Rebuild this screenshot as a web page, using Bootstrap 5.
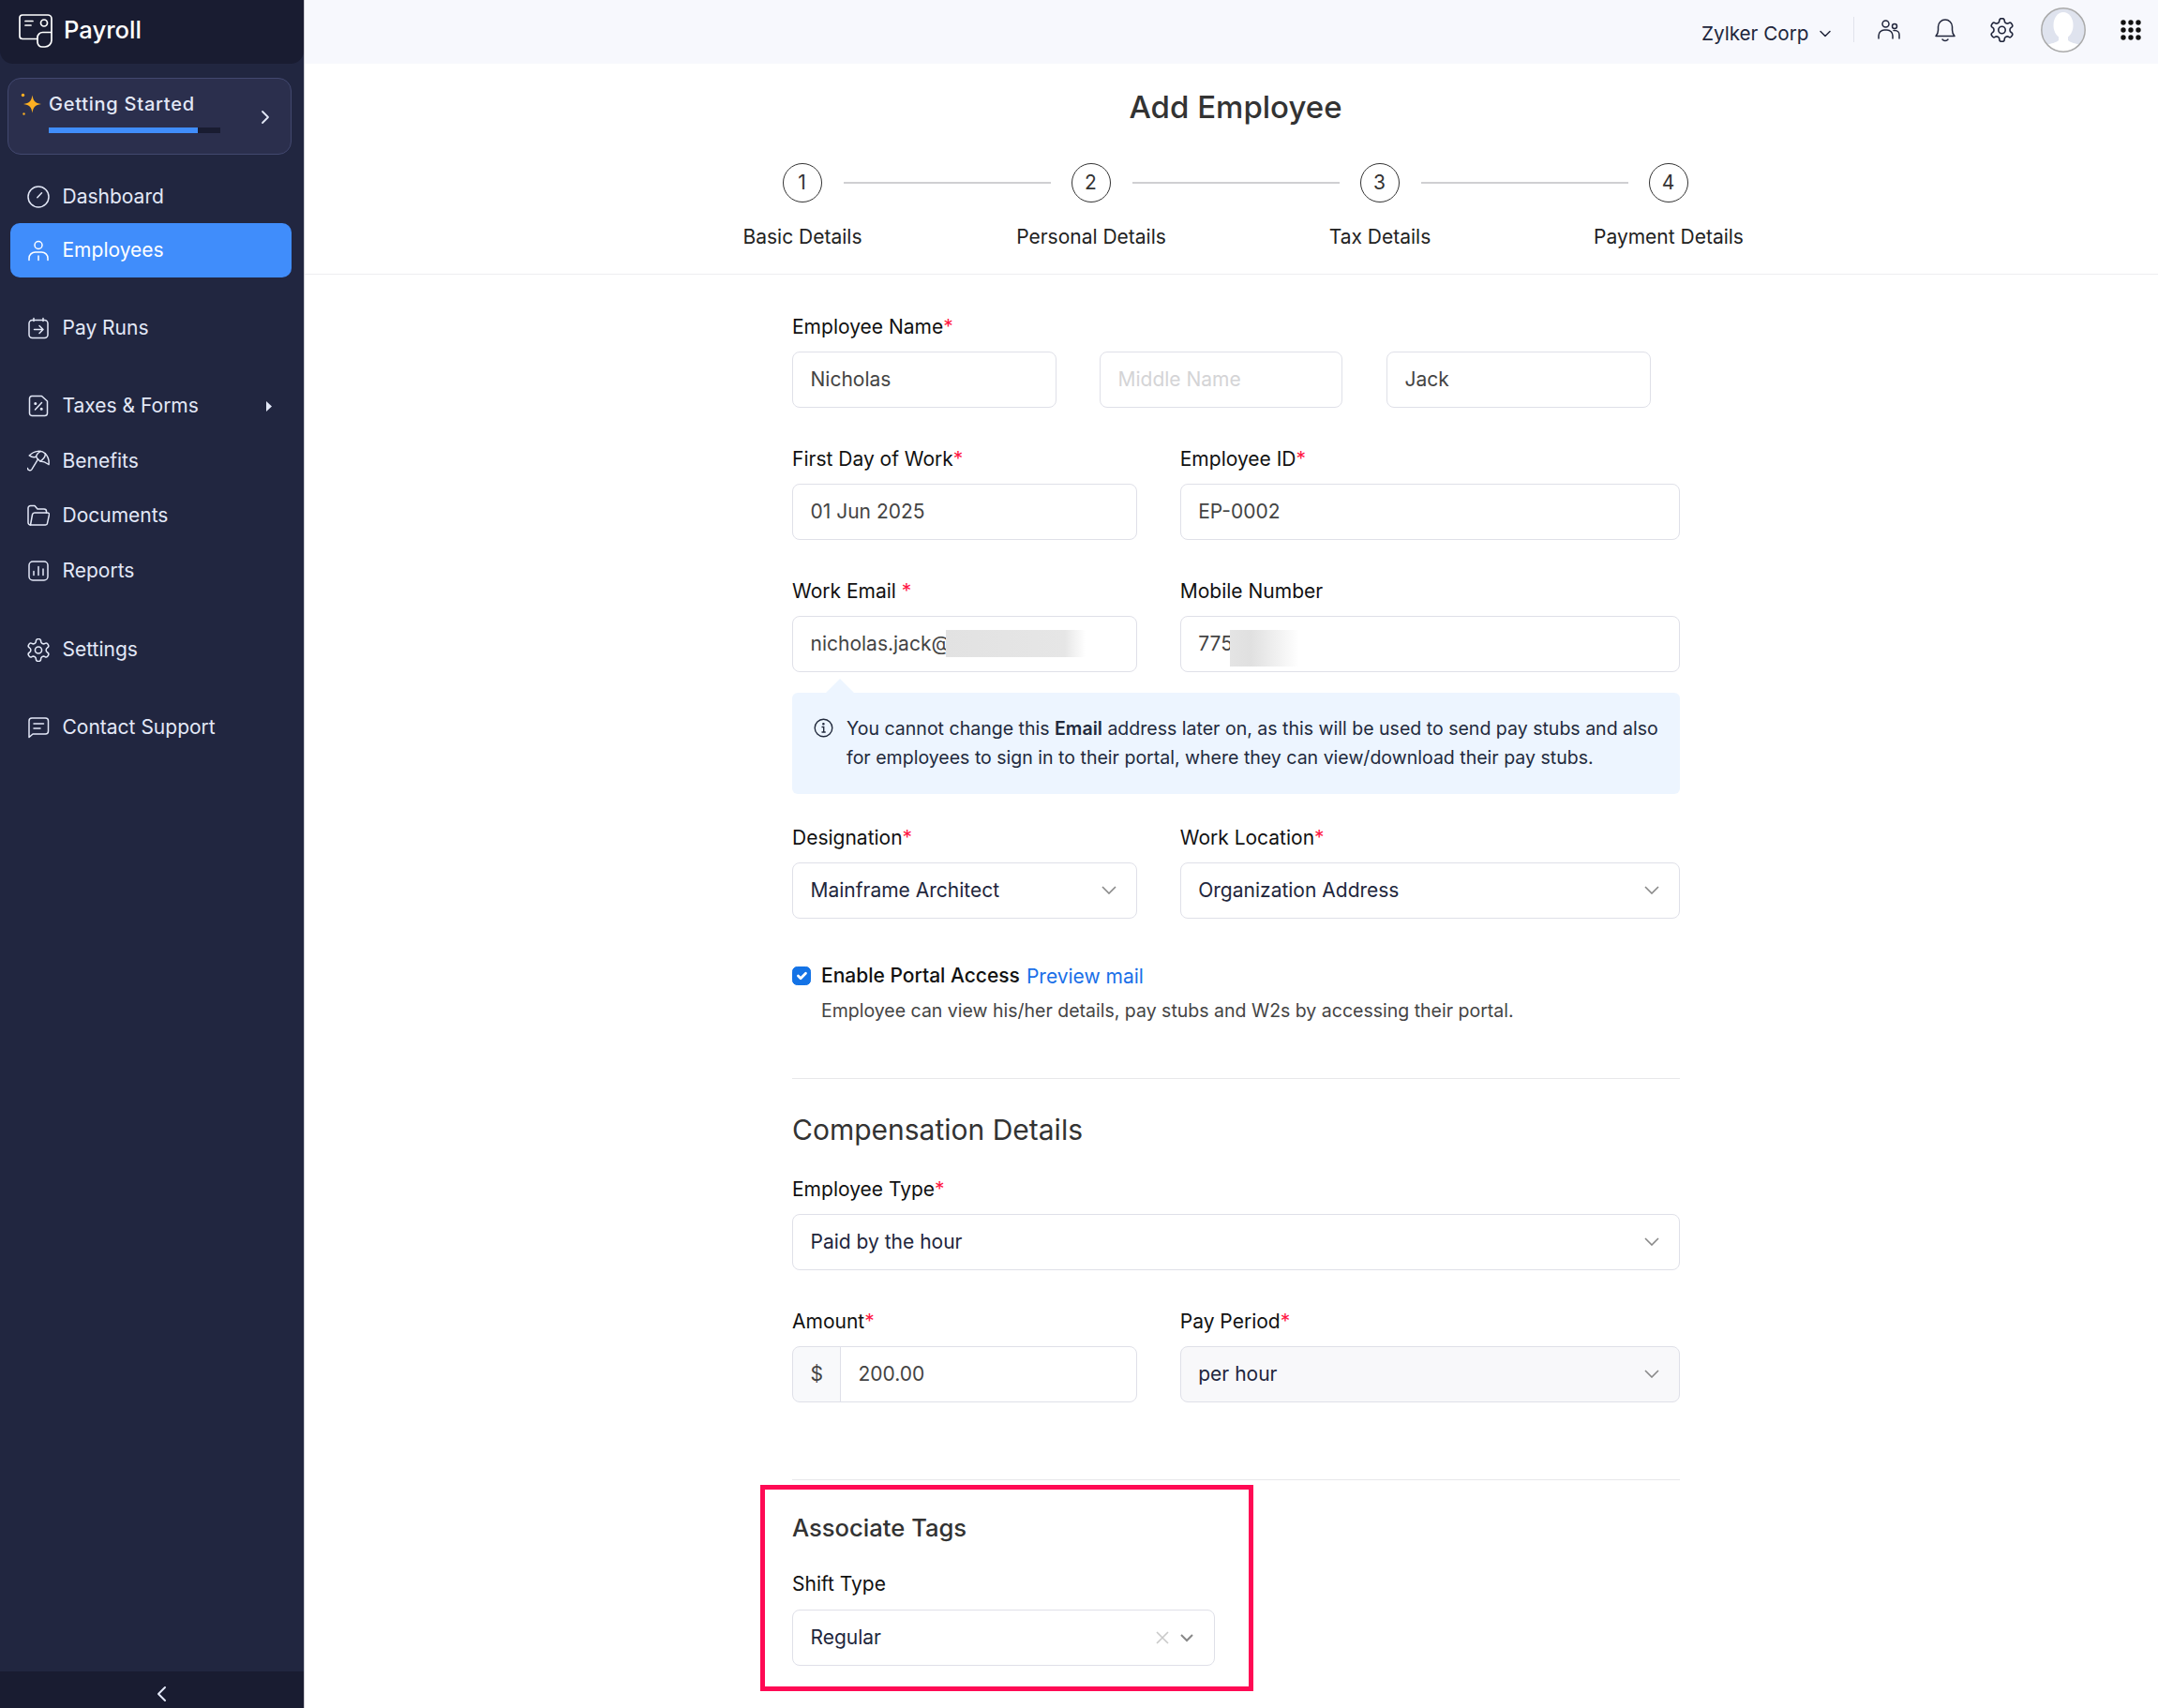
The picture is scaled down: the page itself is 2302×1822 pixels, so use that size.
<!DOCTYPE html>
<html lang="en">
<head>
<meta charset="UTF-8">
<meta name="viewport" content="width=device-width, initial-scale=1.0">
<title>Payroll - Add Employee</title>
<link href="https://cdn.jsdelivr.net/npm/bootstrap@5.3.0/dist/css/bootstrap.min.css" rel="stylesheet">
<style>
    html, body { height: 100%; }
    body { font-family: Inter, "Liberation Sans", sans-serif; font-size: 21px; color: #21263c; background: #fff; overflow: hidden; }

    /* sidebar */
    .side { width: 325px; height: 100vh; background: #212640; border-right: 1.5px solid #c9c9cf; color: #e3e8f7; flex: none; }
    .side-top { height: 68px; background: #191c31; border-radius: 0 0 14px 14px; padding: 0 0 3px 20px; gap: 12px; font-size: 25.6px; font-weight: 500; color: #fff; }
    .start-box { margin: 15px 13px 0 8px; height: 82px; background: #2b2f4d; border: 1.5px solid #42486f; border-radius: 14px; position: relative; padding: 14px 0 0 13px; }
    .start-title { font-size: 20px; font-weight: 500; letter-spacing: .75px; margin-left: 6px; line-height: 26px; }
    .start-bar { width: 183px; height: 6px; background: #191c31; margin: 12px 0 0 30px; }
    .start-fill { height: 100%; background: #408dfb; }
    .start-arrow { position: absolute; right: 22px; top: 33px; }
    .side-link { height: 58px; width: 300px; margin-left: 11px; padding-left: 18px; gap: 13.5px; border-radius: 10px; color: #e3e8f7; text-decoration: none; }
    .side-link.on { background: #408dfb; color: #fff; }
    .side-link svg { flex: none; }
    .m-dash { margin-top: 15.5px; }
    .m-tight { margin-top: -.5px; }
    .m-group { margin-top: 25px; }
    .m-one { margin-top: 1px; }
    .m-set { margin-top: 26px; }
    .m-help { margin-top: 25px; }
    .side-end { height: 39px; background: #191c31; padding: 9px 0 0 20px; }
    .ico { fill: none; stroke: currentColor; stroke-width: 1.5; stroke-linecap: round; stroke-linejoin: round; }
    .ico-cog { stroke-width: 1.3; }
    .tax-arrow { margin-right: 21px; }

    /* top bar */
    .top-strip { height: 68px; background: #f7f8fd; padding: 0 18px 5px 0; color: #21263c; }
    .org-name { font-size: 20.7px; margin: 8px 10px 0 0; }
    .org-arrow { margin-top: 8px; }
    .top-sep { width: 1.5px; height: 27px; background: #e1e3ec; margin: 0 25px 0 23px; }
    .gap-a { margin-right: 36px; }
    .gap-b { margin-right: 29px; }
    .gap-c { margin-right: 37px; }

    /* heading and steps */
    .page-head { height: 225px; border-bottom: 1.5px solid #eeeef1; padding: 26.5px 0 0 9px; }
    .page-title { font-size: 33px; line-height: 38px; font-weight: 500; color: #333; margin: 0 0 41.5px; }
    .step-wrap { width: 1232px; }
    .step-col { width: 308px; text-align: center; color: #222; }
    .step-ball { width: 42px; height: 42px; flex: none; border: 1.5px solid #333; border-radius: 50%; font-size: 21px; color: #333; }
    .step-line { height: 1.5px; background: #cfcfd2; flex: 1; }
    .step-l { margin-right: 22px; }
    .step-r { margin-left: 23px; }
    .step-name { line-height: 30px; margin-top: 21.5px; }

    /* form */
    .form-wrap { padding: 40.5px 0 0 10px; }
    .form-col { width: 947px; }
    .row-gap { --bs-gutter-x: 46px; }
    .fld-label { display: block; line-height: 30px; margin-bottom: 11px; color: #111; }
    .req { color: #ff1744; }
    .fld-row { margin-bottom: 40px; }
    .form-control, .form-select, .input-group-text { font-size: 21px; height: 60px; border: 1.5px solid #dfe0e8; border-radius: 8px; padding: 0 18.5px; color: #444; box-shadow: none; }
    .form-select { color: #21263c; background-size: 16px 9px; background-position: right 21px center; background-image: url("data:image/svg+xml,%3Csvg xmlns='http://www.w3.org/2000/svg' viewBox='0 0 16 9'%3E%3Cpath fill='none' stroke='%23888' stroke-width='1.6' d='M1 1l7 7 7-7'/%3E%3C/svg%3E"); }
    .form-control::placeholder { color: #d4d4d6; }
    .name-a { width: 282px; }
    .name-b { width: 259px; margin: 0 47px 0 46px; }
    .name-c { width: 282px; }
    .input-group-text { width: 52px; background: #f8f9fb; color: #444; }
    .sel-soft { background-color: #f8f8fa; }
    .mask-mail { position: absolute; left: 164px; top: 15px; width: 149px; height: 29px; background: linear-gradient(to right, #e2e2e2, #e6e6e6 85%, #fff); }
    .mask-phone { position: absolute; left: 53px; top: 15px; width: 74px; height: 39px; background: linear-gradient(to right, #e4e4e4, #e0e0e0 30%, #fff); }
    .note-box { position: relative; background: #edf5ff; border-radius: 6px; height: 108px; margin: 22px 0 32px; padding: 23px 12px 0 23px; gap: 14px; line-height: 31px; font-size: 19.55px; color: #222a3d; }
    .note-box::before { content: ""; position: absolute; left: 36px; top: -15px; border-left: 15px solid transparent; border-right: 15px solid transparent; border-bottom: 15px solid #edf5ff; }
    .note-box b { font-weight: 600; }
    .portal-row { margin-top: 47px; line-height: 26px; }
    .form-check-input { width: 20px; height: 20px; margin: 0 11px 0 0; border-radius: 4px; flex: none; }
    .form-check-input:checked { background-color: #1473e6; border-color: #1473e6; }
    .portal-name { font-weight: 500; color: #111; margin-right: 7px; }
    .portal-link { color: #1a6fe8; text-decoration: none; margin-top: 2px; }
    .portal-hint { margin: 10px 0 0 31px; line-height: 26px; font-size: 19.5px; color: #444; }
    .split-line { border-top: 1.5px solid #e8e8ea; }
    .line-a { margin-top: 59px; }
    .line-b { margin-top: 82.5px; }
    .sec-title { font-size: 30px; line-height: 38px; color: #333; margin: 35px 0 30px; font-weight: 400; }
    .frame-box { width: 526px; height: 220px; margin: 5px 0 0 -34px; border: 5px solid #ff0a54; padding: 24px 0 0 29px; }
    .tag-title { font-size: 25.6px; line-height: 34px; font-weight: 500; color: #333; margin: 0 0 28px; }
    .shift-input { width: 451px; color: #21263c; padding-right: 22px; margin-top: 12px; }
</style>
</head>
<body class="d-flex">
<svg class="d-none">
    <symbol id="cog" viewBox="2 1.500 20 21"><path d="M12.220 2h-.44a2 2 0 0 0-2 2v.18a2 2 0 0 1-1 1.730l-.43.25a2 2 0 0 1-2 0l-.15-.08a2 2 0 0 0-2.730.73l-.22.38a2 2 0 0 0 .73 2.730l.15.1a2 2 0 0 1 1 1.720v.51a2 2 0 0 1-1 1.740l-.15.09a2 2 0 0 0-.73 2.730l.22.38a2 2 0 0 0 2.730.73l.15-.08a2 2 0 0 1 2 0l.43.25a2 2 0 0 1 1 1.730V20a2 2 0 0 0 2 2h.44a2 2 0 0 0 2-2v-.18a2 2 0 0 1 1-1.730l.43-.25a2 2 0 0 1 2 0l.15.08a2 2 0 0 0 2.730-.73l.22-.39a2 2 0 0 0-.73-2.730l-.15-.08a2 2 0 0 1-1-1.740v-.5a2 2 0 0 1 1-1.740l.15-.09a2 2 0 0 0 .73-2.730l-.22-.38a2 2 0 0 0-2.730-.73l-.15.08a2 2 0 0 1-2 0l-.43-.25a2 2 0 0 1-1-1.730V4a2 2 0 0 0-2-2z"/><circle cx="12" cy="12" r="3"/></symbol>
</svg>

<aside class="side d-flex flex-column">
    <div class="side-top d-flex align-items-center">
        <svg width="36" height="36" viewBox="20 14 36 36" class="ico" style="stroke-width:1.7"><path d="M39 40.500H24a3 3 0 0 1-3-3V18a3 3 0 0 1 3-3h27a4 4 0 0 1 4 4v23a7 7 0 0 1-7 7h-3a5 5 0 0 1-5-5v-5a5.500 5.500 0 0 1 5.500-5.500H55"/><path d="M27 21.500h8M27 26h6"/><circle cx="47" cy="23.500" r="3.500"/></svg>
        <span>Payroll</span>
    </div>
    <div class="start-box">
        <div class="d-flex align-items-center">
            <svg width="24" height="26" viewBox="0 0 24 26"><path fill="#fdb022" d="M12.500 3.500c.9 6 3 8.600 9.500 9.500-6.500.9-8.600 3.500-9.500 9.500-.9-6-3-8.600-9.500-9.500 6.500-.9 8.600-3.500 9.500-9.500z"/><circle cx="2.500" cy="3.500" r="1.700" fill="#fdb022"/><circle cx="3.500" cy="23.500" r="1.200" fill="#fdb022"/></svg>
            <span class="start-title">Getting Started</span>
        </div>
        <div class="start-bar"><div class="start-fill" style="width:87%"></div></div>
        <svg class="start-arrow ico" width="10" height="16" viewBox="0 0 10 16" style="stroke-width:1.8"><path d="M2 2l6 6-6 6"/></svg>
    </div>
    <a class="side-link d-flex align-items-center m-dash" href="#"><svg class="ico" width="24" height="24" viewBox="0 0 24 24"><circle cx="12" cy="12" r="11"/><path d="M10.800 12.800l4.700-5"/></svg>Dashboard</a>
    <a class="side-link on d-flex align-items-center m-tight" href="#"><svg class="ico" width="24" height="24" viewBox="0 0 24 24"><circle cx="12" cy="6.500" r="4"/><path d="M2 22.500v-2a6.500 6.500 0 0 1 6.500-6.500h7a6.500 6.500 0 0 1 6.500 6.500v2M12 18v4.500"/></svg>Employees</a>
    <a class="side-link d-flex align-items-center m-group" href="#"><svg class="ico" width="24" height="24" viewBox="0 0 24 24"><rect x="2" y="3.500" width="20" height="19" rx="3.500"/><path d="M7 1.500v3M17 1.500v3M7.500 13.500h9M13 9.500l4 4-4 4"/></svg>Pay Runs</a>
    <a class="side-link d-flex align-items-center m-group" href="#"><svg class="ico" width="24" height="24" viewBox="0 0 24 24"><path d="M5 1.500h10.500l6 5.500v13a2.800 2.800 0 0 1-2.800 2.500H5A2.800 2.800 0 0 1 2.500 20V4A2.800 2.800 0 0 1 5 1.500z"/><path d="M8.500 16l7-7.500"/><circle cx="8.800" cy="9.500" r=".8"/><circle cx="15.200" cy="15.200" r=".8"/></svg>Taxes &amp; Forms<svg class="ms-auto tax-arrow" width="6" height="11" viewBox="0 0 6 11"><path fill="#e3e8f7" d="M0 0l6 5.500L0 11z"/></svg></a>
    <a class="side-link d-flex align-items-center m-one" href="#"><svg class="ico" width="24" height="24" viewBox="0 0 25 24"><path d="M2.300 5.700C8 0 16-.5 20 3.500c4 4 4.500 7.500 4 12.200-3-2.200-4.500-3.500-9.500-3.700C13 11 10.800 9.500 10 7 7 8.200 5 7.500 2.300 5.700z"/><path d="M15 1c-3 1.500-4.500 3.500-5 6M20 3.500c.5 3-2.500 6.500-5.500 8.500M12 9.700L5 21.200a2.500 2.500 0 0 1-4.500-1.500"/></svg>Benefits</a>
    <a class="side-link d-flex align-items-center" href="#"><svg class="ico" width="24" height="24" viewBox="0 0 24 24"><path d="M3.500 22A2.500 2.500 0 0 1 1 19.500V4a2.500 2.500 0 0 1 2.500-2.500H8l3 3.500h7a2.500 2.500 0 0 1 2.500 2.500V9"/><path d="M3.500 22h16a2 2 0 0 0 2-1.800L23.500 11a1.800 1.800 0 0 0-1.800-2H8a2.500 2.500 0 0 0-2.500 2L3.500 22z"/></svg>Documents</a>
    <a class="side-link d-flex align-items-center m-one" href="#"><svg class="ico" width="24" height="24" viewBox="0 0 24 24"><rect x="2" y="2" width="20" height="20" rx="4"/><path d="M7 16.500v-4M12 16.500v-9M17 16.500v-6.500"/></svg>Reports</a>
    <a class="side-link d-flex align-items-center m-set" href="#"><svg class="ico ico-cog" width="24" height="25" viewBox="0 0 24 25"><use href="#cog"/></svg>Settings</a>
    <a class="side-link d-flex align-items-center m-help" href="#"><svg class="ico" width="24" height="24" viewBox="0 0 24 24"><path d="M2 22.500V5a3 3 0 0 1 3-3h14.500a3 3 0 0 1 3 3v11a3 3 0 0 1-3 3H6z"/><path d="M7 8h10.500M7 13h7"/></svg>Contact Support</a>
    <div class="side-end mt-auto d-flex align-items-center justify-content-center">
        <svg class="ico" width="12" height="18" viewBox="0 0 12 18" style="stroke-width:2"><path d="M10 2L3 9l7 7"/></svg>
    </div>
</aside>

<div class="flex-grow-1">
    <div class="top-strip d-flex align-items-center justify-content-end">
        <span class="org-name">Zylker Corp</span>
        <svg class="ico org-arrow" width="14" height="8" viewBox="0 0 14 8"><path d="M2 1.500l5 5 5-5"/></svg>
        <span class="top-sep"></span>
        <svg class="ico gap-a" width="24" height="24" viewBox="0 0 24 24"><circle cx="8.500" cy="5.500" r="3.500"/><circle cx="18" cy="8" r="2.500"/><path d="M1 21v-3a6 6 0 0 1 6-6h3a6 6 0 0 1 6 6v3M17 12.500h1.500a4.500 4.500 0 0 1 4.500 4.500v4"/></svg>
        <svg class="ico gap-a" width="24" height="26" viewBox="0 0 24 26"><path d="M2 19.500c2-2 2.500-3 2.500-6.500V9.500a7.500 7.500 0 0 1 15 0V13c0 3.500.5 4.500 2.500 6.500z"/><path d="M9 23c1.500 2 4.500 2 6 0"/></svg>
        <svg class="ico ico-cog gap-b" width="25" height="26" viewBox="0 0 25 26"><use href="#cog"/></svg>
        <svg class="gap-c" width="48" height="48" viewBox="0 0 48 48"><defs><clipPath id="avatarClip"><circle cx="24" cy="24" r="23"/></clipPath></defs><circle cx="24" cy="24" r="23" fill="#dfe3ee"/><g clip-path="url(#avatarClip)"><ellipse cx="24" cy="19" rx="10.500" ry="14" fill="#fff"/><path fill="#fff" d="M19 30h10v5c3 3 8 3 12 5v8H7v-8c4-2 9-2 12-5z"/></g><circle cx="24" cy="24" r="23.200" fill="none" stroke="#aaa" stroke-width="1.500"/></svg>
        <svg width="22" height="22" viewBox="0 0 22 22" fill="#111"><circle cx="3" cy="3" r="2.700"/><circle cx="11" cy="3" r="2.700"/><circle cx="19" cy="3" r="2.700"/><circle cx="3" cy="11" r="2.700"/><circle cx="11" cy="11" r="2.700"/><circle cx="19" cy="11" r="2.700"/><circle cx="3" cy="19" r="2.700"/><circle cx="11" cy="19" r="2.700"/><circle cx="19" cy="19" r="2.700"/></svg>
    </div>

    <div class="page-head">
        <h1 class="page-title text-center">Add Employee</h1>
        <div class="step-wrap d-flex mx-auto">
            <div class="step-col">
                <div class="d-flex align-items-center"><span class="step-line step-l invisible"></span><span class="step-ball d-flex align-items-center justify-content-center">1</span><span class="step-line step-r"></span></div>
                <div class="step-name">Basic Details</div>
            </div>
            <div class="step-col">
                <div class="d-flex align-items-center"><span class="step-line step-l"></span><span class="step-ball d-flex align-items-center justify-content-center">2</span><span class="step-line step-r"></span></div>
                <div class="step-name">Personal Details</div>
            </div>
            <div class="step-col">
                <div class="d-flex align-items-center"><span class="step-line step-l"></span><span class="step-ball d-flex align-items-center justify-content-center">3</span><span class="step-line step-r"></span></div>
                <div class="step-name">Tax Details</div>
            </div>
            <div class="step-col">
                <div class="d-flex align-items-center"><span class="step-line step-l"></span><span class="step-ball d-flex align-items-center justify-content-center">4</span><span class="step-line step-r invisible"></span></div>
                <div class="step-name">Payment Details</div>
            </div>
        </div>
    </div>

    <div class="form-wrap">
        <form class="form-col mx-auto">
            <div class="fld-row">
                <label class="fld-label">Employee Name<span class="req">*</span></label>
                <div class="d-flex">
                    <input class="form-control name-a" value="Nicholas">
                    <input class="form-control name-b" placeholder="Middle Name">
                    <input class="form-control name-c" value="Jack">
                </div>
            </div>
            <div class="row row-gap fld-row">
                <div class="col-5">
                    <label class="fld-label">First Day of Work<span class="req">*</span></label>
                    <input class="form-control" value="01 Jun 2025">
                </div>
                <div class="col-7">
                    <label class="fld-label">Employee ID<span class="req">*</span></label>
                    <input class="form-control" value="EP-0002">
                </div>
            </div>
            <div class="row row-gap">
                <div class="col-5">
                    <label class="fld-label">Work Email <span class="req">*</span></label>
                    <div class="position-relative">
                        <input class="form-control" value="nicholas.jack@">
                        <span class="mask-mail"></span>
                    </div>
                </div>
                <div class="col-7">
                    <label class="fld-label">Mobile Number</label>
                    <div class="position-relative">
                        <input class="form-control" value="775">
                        <span class="mask-phone"></span>
                    </div>
                </div>
            </div>
            <div class="note-box d-flex">
                <svg class="flex-none mt-1" width="21" height="21" viewBox="0 0 21 21" fill="none" stroke="#222a3d" stroke-width="1.400"><circle cx="10.500" cy="10.500" r="9.300"/><path d="M8.500 9.500h2.200v5.500M8.500 15h4.200"/><circle cx="10.400" cy="6.200" r=".6" fill="#222a3d"/></svg>
                <div>You cannot change this <b>Email</b> address later on, as this will be used to send pay stubs and also<br>for employees to sign in to their portal, where they can view/download their pay stubs.</div>
            </div>
            <div class="row row-gap">
                <div class="col-5">
                    <label class="fld-label">Designation<span class="req">*</span></label>
                    <select class="form-select"><option>Mainframe Architect</option></select>
                </div>
                <div class="col-7">
                    <label class="fld-label">Work Location<span class="req">*</span></label>
                    <select class="form-select"><option>Organization Address</option></select>
                </div>
            </div>
            <div class="portal-row d-flex align-items-center">
                <input class="form-check-input" type="checkbox" checked>
                <span class="portal-name">Enable Portal Access</span>
                <a class="portal-link" href="#">Preview mail</a>
            </div>
            <div class="portal-hint">Employee can view his/her details, pay stubs and W2s by accessing their portal.</div>
            <div class="split-line line-a"></div>
            <h2 class="sec-title">Compensation Details</h2>
            <div class="fld-row">
                <label class="fld-label">Employee Type<span class="req">*</span></label>
                <select class="form-select"><option>Paid by the hour</option></select>
            </div>
            <div class="row row-gap">
                <div class="col-5">
                    <label class="fld-label">Amount<span class="req">*</span></label>
                    <div class="input-group">
                        <span class="input-group-text">$</span>
                        <input class="form-control" value="200.00">
                    </div>
                </div>
                <div class="col-7">
                    <label class="fld-label">Pay Period<span class="req">*</span></label>
                    <select class="form-select sel-soft"><option>per hour</option></select>
                </div>
            </div>
            <div class="split-line line-b"></div>
            <div class="frame-box">
                <h3 class="tag-title">Associate Tags</h3>
                <label class="fld-label">Shift Type</label>
                <div class="form-control shift-input d-flex align-items-center">
                    <span class="me-auto">Regular</span>
                    <svg width="14" height="14" viewBox="0 0 14 14" fill="none" stroke="#c9c9c9" stroke-width="1.600"><path d="M1 1l12 12M13 1L1 13"/></svg>
                    <svg style="margin-left:12px" width="14" height="9" viewBox="0 0 14 9" fill="none" stroke="#888" stroke-width="2"><path d="M1 1l6 6 6-6"/></svg>
                </div>
            </div>
        </form>
    </div>
</div>
<script src="https://cdn.jsdelivr.net/npm/bootstrap@5.3.0/dist/js/bootstrap.bundle.min.js"></script>
</body>
</html>
